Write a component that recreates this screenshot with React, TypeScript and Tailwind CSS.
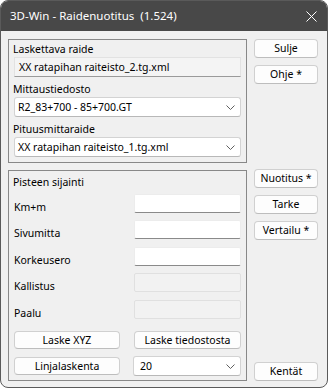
import React from "react";

function Chevron() {
  return (
    <svg width="9" height="5" viewBox="0 0 9 5" className="shrink-0">
      <path d="M0.5 0.5 L4.5 4.5 L8.5 0.5" stroke="#5f5f5f" strokeWidth="1" fill="none" />
    </svg>
  );
}

function Btn({ label, className = "" }: { label: string; className?: string }) {
  return (
    <div
      className={
        "flex items-center justify-center rounded-[4px] border border-[#d0d0d0] border-b-[#bdbdbd] bg-[#fdfdfd] text-black leading-none " +
        className
      }
    >
      {label}
    </div>
  );
}

function Select({ value, className = "" }: { value: string; className?: string }) {
  return (
    <div
      className={
        "flex items-center justify-between rounded-[3px] border border-[#d3d3d3] border-b-[#b8b8b8] bg-white pr-[5px] text-black " +
        className
      }
    >
      <span className="leading-none">{value}</span>
      <Chevron />
    </div>
  );
}

function Row({ label, disabled = false }: { label: string; disabled?: boolean }) {
  return (
    <div className="flex h-[19px] justify-between">
      <div className="mt-[5px] h-[16px] leading-[16px] pl-[-1px]">{label}</div>
      {disabled ? (
        <div className="h-[19px] w-[107px] rounded-[2px] border border-[#e0e0e0] bg-[#f2f2f2]" />
      ) : (
        <div className="h-[19px] w-[107px] rounded-[2px] border border-[#ececec] border-b-[#8a8a8a] bg-white" />
      )}
    </div>
  );
}

export default function App() {
  return (
    <div className="h-[388px] w-[328px] bg-white">
      <div className="flex h-full w-full flex-col overflow-hidden rounded-[8px] border border-[#5a5a5a] bg-[#f0f0f0] font-['Noto_Sans',sans-serif] text-[10.5px] text-black">
        {/* Title bar */}
        <div className="flex h-[30px] shrink-0 items-center justify-between bg-[#484848] pl-[9px] pr-[9px] text-white">
          <span className="whitespace-pre text-[11.5px] leading-none">3D-Win - Raidenuotitus  (1.524)</span>
          <svg width="11" height="11" viewBox="0 0 11 11" className="mr-[1px]">
            <path d="M0.5 0.5 L10.5 10.5 M10.5 0.5 L0.5 10.5" stroke="#ffffff" strokeWidth="1" fill="none" />
          </svg>
        </div>

        {/* Body */}
        <div className="flex flex-1 gap-[7px] pb-[6px] pl-[7px] pt-[8px]">
          {/* Left column */}
          <div className="flex w-[239px] flex-col gap-[7px]">
            {/* Group 1 */}
            <div className="flex h-[124px] flex-col border border-[#888888] px-[5px] pb-[5px] pt-[1px]">
              <div className="h-[16px] leading-[16px] -ml-[1px]">Laskettava raide</div>
              <div className="flex h-[20px] items-center border border-[#e2e2e2] border-b-[#9a9a9a] bg-[#f4f4f4] pl-[4px]">
                <span className="leading-none">XX ratapihan raiteisto_2.tg.xml</span>
              </div>
              <div className="mt-[4px] h-[16px] leading-[16px] -ml-[1px]">Mittaustiedosto</div>
              <Select value="R2_83+700 - 85+700.GT" className="h-[20px] pl-[3px]" />
              <div className="mt-[4px] h-[16px] leading-[16px] -ml-[1px]">Pituusmittaraide</div>
              <Select value="XX ratapihan raiteisto_1.tg.xml" className="h-[20px] pl-[3px]" />
            </div>

            {/* Group 2 */}
            <div className="flex h-[211px] flex-col border border-[#888888] px-[5px] pb-[4px] pt-[3px]">
              <div className="h-[16px] leading-[16px] -ml-[1px]">Pisteen sijainti</div>
              <div className="mt-[4px] flex flex-col">
                <Row label="Km+m" />
                <div className="mt-[7px]">
                  <Row label="Sivumitta" />
                </div>
                <div className="mt-[8px]">
                  <Row label="Korkeusero" />
                </div>
                <div className="mt-[7px]">
                  <Row label="Kallistus" disabled />
                </div>
                <div className="mt-[8px]">
                  <Row label="Paalu" disabled />
                </div>
              </div>
              <div className="mt-[12px] flex justify-between">
                <Btn label="Laske XYZ" className="h-[18px] w-[106px]" />
                <Btn label="Laske tiedostosta" className="h-[18px] w-[107px]" />
              </div>
              <div className="mt-[7px] flex h-[20px] items-center justify-between">
                <Btn label="Linjalaskenta" className="h-[18px] w-[106px]" />
                <Select value="20" className="h-[20px] w-[108px] pl-[6px]" />
              </div>
            </div>
          </div>

          {/* Right column */}
          <div className="flex w-[64px] flex-col">
            <Btn label="Sulje" className="h-[19px]" />
            <Btn label="Ohje *" className="mt-[7px] h-[19px]" />
            <Btn label="Nuotitus *" className="mt-[85px] h-[19px]" />
            <Btn label="Tarke" className="mt-[7px] h-[19px]" />
            <Btn label="Vertailu *" className="mt-[7px] h-[19px]" />
            <Btn label="Kentät" className="mt-auto h-[19px]" />
          </div>
        </div>
      </div>
    </div>
  );
}
